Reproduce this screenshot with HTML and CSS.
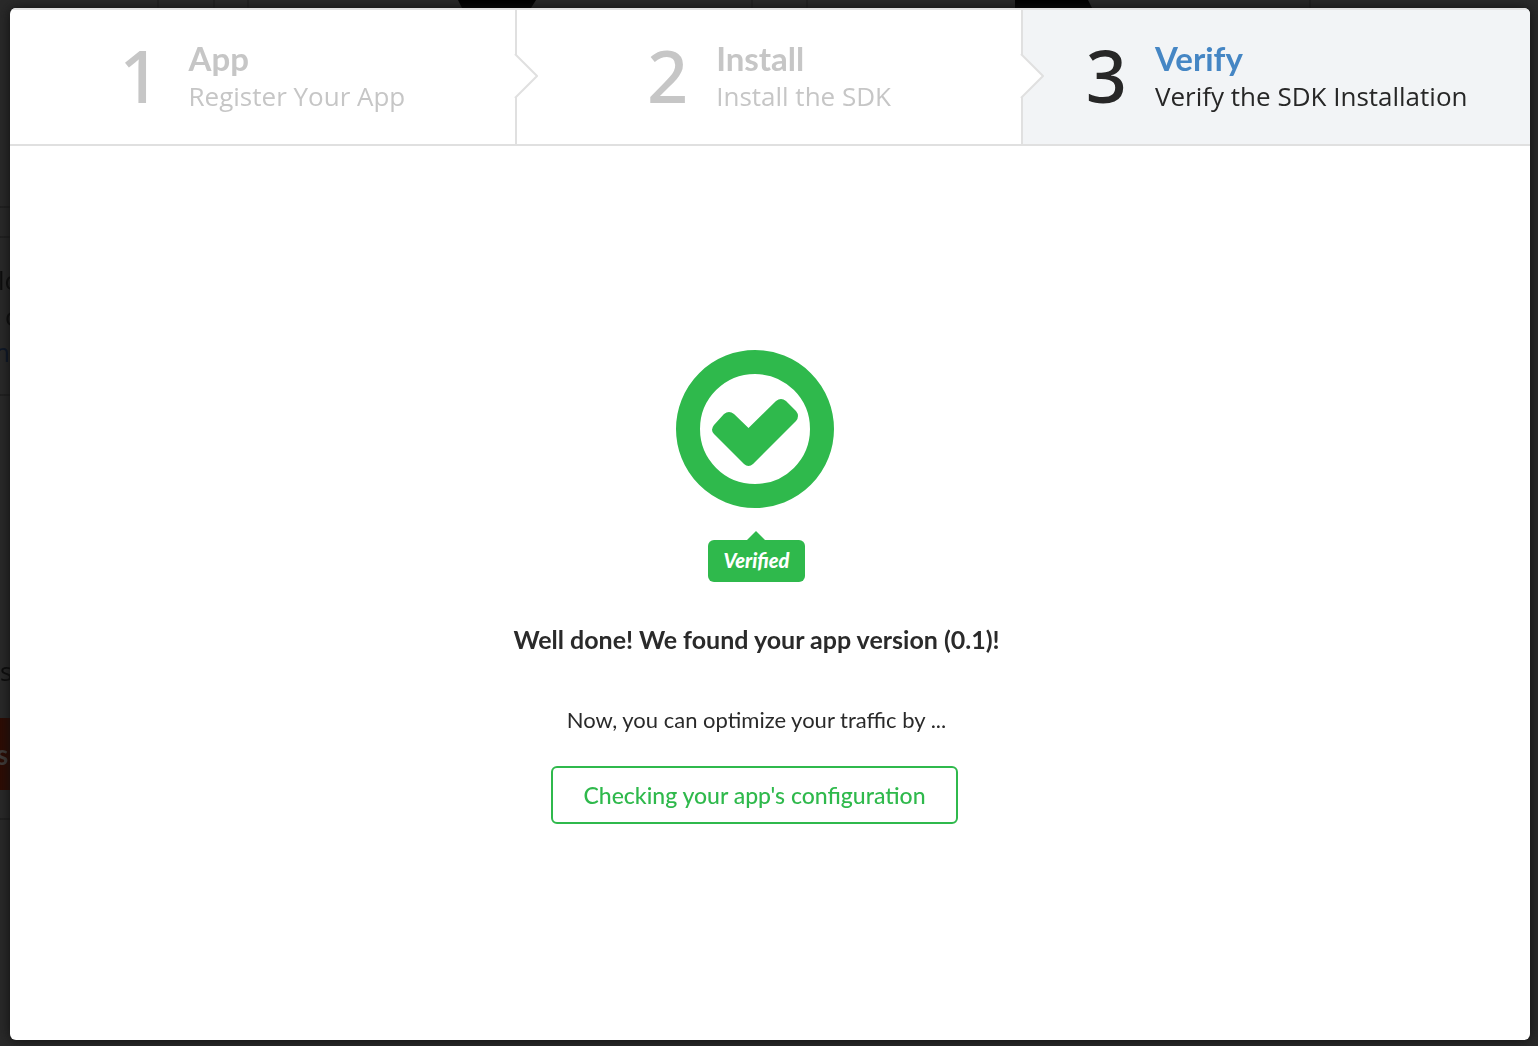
FILE: index.html
```html
<!DOCTYPE html>
<html lang="en">
<head>
<meta charset="utf-8">
<meta name="viewport" content="width=device-width, initial-scale=1">
<title>Verify the SDK Installation</title>
<link rel="stylesheet" href="styles.css">
</head>
<body>
<div class="backdrop" aria-hidden="true">
  <svg class="backdrop-art" width="100%" height="8">
    <path d="M458 0H536L531 8H462ZM1015 0H1088L1092 8H1015Z" fill="#000"/>
    <path d="M158 0V8M214 0V8M248 0V8M752 0V8M807 0V8M1310 0V8" stroke="#222" stroke-width="2"/>
  </svg>
  <span class="rule rule-a"></span>
  <span class="rule rule-b"></span>
  <span class="rule rule-c"></span>
  <span class="rule rule-d"></span>
  <span class="scrap scrap-a">lo</span>
  <span class="scrap scrap-b">c</span>
  <span class="scrap scrap-c">m</span>
  <span class="scrap scrap-d">s</span>
  <span class="red-block">s</span>
</div>
<main class="modal">
  <ol class="steps">
    <li class="step">
      <span class="step-number">1</span>
      <div class="step-text">
        <div class="step-title">App</div>
        <div class="step-caption">Register Your App</div>
      </div>
      <svg class="step-arrow" width="24" height="46" viewBox="0 0 24 46"><path d="M1 1L23 23L1 45"/></svg>
    </li>
    <li class="step">
      <span class="step-number">2</span>
      <div class="step-text">
        <div class="step-title">Install</div>
        <div class="step-caption">Install the SDK</div>
      </div>
      <svg class="step-arrow" width="24" height="46" viewBox="0 0 24 46"><path d="M1 1L23 23L1 45"/></svg>
    </li>
    <li class="step step-active" aria-current="step">
      <span class="step-number">3</span>
      <div class="step-text">
        <div class="step-title">Verify</div>
        <div class="step-caption">Verify the SDK Installation</div>
      </div>
    </li>
  </ol>
  <section class="result">
    <svg class="check" width="158" height="158" viewBox="0 0 158 158" aria-hidden="true">
      <circle cx="79" cy="79" r="67" fill="none" stroke="#2fb94c" stroke-width="24"/>
      <path d="M48 64Q53 60 58 64L72.500 78L100 51Q105 47 110 51L120 61Q124 66 120 71L77 114Q72.500 118 68 114L38 84Q34 80 38 75Z" fill="#2fb94c"/>
    </svg>
    <div class="badge">Verified</div>
    <h1 class="headline">Well done! We found your app version (0.1)!</h1>
    <p class="lead">Now, you can optimize your traffic by ...</p>
    <button class="action" type="button">Checking your app's configuration</button>
  </section>
</main>
</body>
</html>
```
FILE: styles.css
```css
* {
  box-sizing: border-box;
}

body {
  margin: 0;
  min-height: 100vh;
  display: flex;
  padding: 8px 8px 6px 10px;
  background: #292929;
  color: #2a2a2a;
  font-family: Lato, "Liberation Sans", sans-serif;
}

/* Dimmed page that shows around the dialog */
.backdrop {
  position: fixed;
  inset: 0;
  overflow: hidden;
}

.backdrop-art {
  position: absolute;
  top: 0;
  left: 0;
}

.rule {
  position: absolute;
  left: 0;
  width: 10px;
  height: 2px;
  background: #202020;
}

.rule-a { top: 206px; }
.rule-b { top: 236px; }
.rule-c { top: 394px; }
.rule-d { top: 818px; }

.scrap {
  position: absolute;
  color: #0c0c0c;
  font-family: "Open Sans", sans-serif;
  font-size: 26px;
  line-height: 32px;
}

.scrap-a { top: 264px; left: -2px; }
.scrap-b { top: 300px; left: 5px; }
.scrap-c { top: 336px; left: -14px; color: #0d1728; }
.scrap-d { top: 655px; left: 0; }

.red-block {
  position: absolute;
  top: 718px;
  left: 0;
  width: 20px;
  height: 72px;
  background: #2d0c04;
  color: #403c3a;
  font-size: 28px;
  font-weight: 700;
  line-height: 72px;
  text-indent: -4px;
}

.modal {
  position: relative;
  flex: 1;
  display: flex;
  flex-direction: column;
  overflow: hidden;
  border-radius: 6px;
  background: #fff;
  box-shadow: 0 0 12px #111;
}

.steps {
  display: grid;
  grid-template-columns: repeat(3, 1fr);
  margin: 0;
  padding: 0;
  list-style: none;
  border-top: 2px solid #e0e0e0;
  border-bottom: 2px solid #e0e0e0;
}

.step {
  position: relative;
  display: flex;
  align-items: center;
  justify-content: center;
  gap: 28px;
  min-height: 134px;
  padding-bottom: 2px;
  border-right: 2px solid #e0e0e0;
  color: #c6c6c6;
}

.step-active {
  border-right: 0;
  background: #f2f4f6;
  color: #272727;
}

.step-number {
  padding-bottom: 2px;
  font-family: "Noto Sans", "Open Sans", sans-serif;
  font-size: 72px;
  font-weight: 500;
  line-height: 98px;
}

.step-title {
  font-size: 33px;
  font-weight: 700;
  line-height: 40px;
}

.step-active .step-title {
  color: #4586c4;
}

.step-caption {
  font-family: "Open Sans", sans-serif;
  font-size: 26px;
  line-height: 36px;
}

/* Chevron that overlaps the divider */
.step-arrow {
  position: absolute;
  top: 43px;
  right: -23px;
  z-index: 1;
  fill: #fff;
  stroke: #e0e0e0;
  stroke-width: 2;
}

.result {
  flex: 1;
  display: flex;
  flex-direction: column;
  align-items: center;
  padding: 204px 27px 40px 0;
}

.check {
  margin-right: 4px;
}

.badge {
  position: relative;
  margin-top: 32px;
  padding: 0 16px 2px;
  border-radius: 6px;
  background: #2fb94c;
  color: #fff;
  font-size: 20px;
  font-style: italic;
  font-weight: 900;
  line-height: 40px;
}

.badge::before {
  content: "";
  position: absolute;
  top: -9px;
  left: calc(50% - 9px);
  border: 9px solid transparent;
  border-top: 0;
  border-bottom-color: #2fb94c;
}

.headline {
  margin: 39px 0 0;
  font-size: 25px;
  font-weight: 700;
  line-height: 36px;
}

.lead {
  margin: 45px 0 0;
  font-size: 22px;
  line-height: 36px;
}

.action {
  margin: 28px 4px 0 0;
  padding: 0 30px;
  border: 2px solid #2fb94c;
  border-radius: 6px;
  background: #fff;
  color: #2fb94c;
  font-family: inherit;
  font-size: 23px;
  font-weight: 500;
  line-height: 54px;
}
```
